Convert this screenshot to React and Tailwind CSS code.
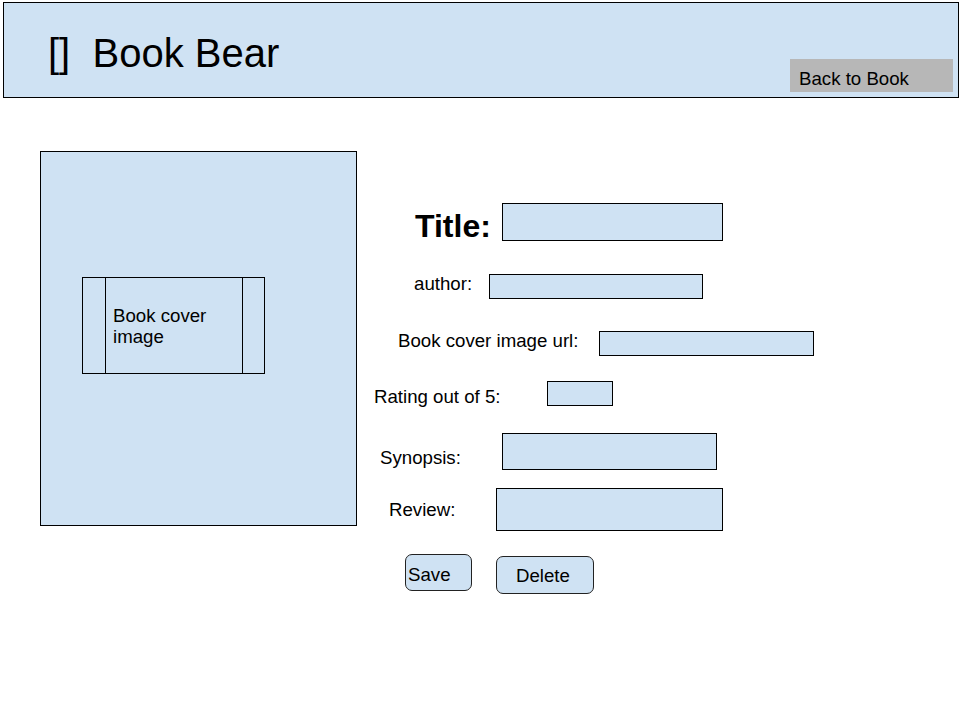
const rows = [
  { id: 'author', label: 'author:', labelWidth: 'w-[132px]', pad: 'pl-[57px]', labelTop: 'mt-[1px]', box: 'mt-[2px] w-[214px] h-[25px]', gap: 'mt-[31px]' },
  { id: 'url', label: 'Book cover image url:', labelWidth: 'w-[242px]', pad: 'pl-[41px]', labelTop: 'mt-[2px]', box: 'mt-[3px] w-[215px] h-[25px]', gap: 'mt-[29px]' },
  { id: 'rating', label: 'Rating out of 5:', labelWidth: 'w-[190px]', pad: 'pl-[17px]', labelTop: 'mt-[5px]', box: 'mt-0 w-[66px] h-[25px]', gap: 'mt-[25px]' },
  { id: 'synopsis', label: 'Synopsis:', labelWidth: 'w-[145px]', pad: 'pl-[23px]', labelTop: 'mt-[14px]', box: 'mt-0 w-[215px] h-[37px]', gap: 'mt-[25px]' },
  { id: 'review', label: 'Review:', labelWidth: 'w-[139px]', pad: 'pl-[32px]', labelTop: 'mt-[11px]', box: 'mt-0 w-[227px] h-[43px]', gap: 'mt-[18px]' },
];

export default function App() {
  return (
    <div className="w-[960px] h-[720px] bg-white text-black font-['Liberation_Sans',Arial,sans-serif]">
      <header className="ml-[3px] mt-[2px] w-[956px] h-[96px] border border-black bg-[#cfe2f3] flex justify-between">
        <h1 className="pl-[44px] pt-[27px] text-[40px] leading-[46px] whitespace-pre">[]  Book Bear</h1>
        <button className="self-end mb-[5px] mr-[5px] w-[163px] h-[33px] bg-[#b7b7b7] text-left pl-[9px] pt-[9px] text-[18.67px] leading-[22px] flex items-start">
          Back to Book
        </button>
      </header>

      <main className="flex mt-[53px]">
        <section className="ml-[40px] w-[317px] h-[375px] shrink-0 border border-black bg-[#cfe2f3]">
          <div className="ml-[41px] mt-[125px] flex w-[183px] h-[97px] border border-black">
            <div className="w-[23px] shrink-0 border-r border-black" />
            <p className="flex-1 pl-[7px] pt-[27px] text-[18.67px] leading-[21px]">Book cover image</p>
            <div className="w-[22px] shrink-0 border-l border-black" />
          </div>
        </section>

        <form className="flex flex-col pt-[52px]">
          <div className="flex items-start h-[38px]">
            <label className="w-[145px] shrink-0 pl-[58px] mt-[5px] text-[32px] leading-[36px] font-bold">Title:</label>
            <div className="w-[221px] h-[38px] border border-black bg-[#cfe2f3]" />
          </div>

          {rows.map((row) => (
            <div key={row.id} className={`flex items-start ${row.gap}`}>
              <label className={`${row.labelWidth} ${row.pad} ${row.labelTop} shrink-0 text-[18.67px] leading-[22px] whitespace-nowrap`}>
                {row.label}
              </label>
              <div className={`${row.box} border border-black bg-[#cfe2f3]`} />
            </div>
          ))}

          <div className="flex items-start mt-[23px]">
            <button type="button" className="ml-[48px] w-[67px] h-[37px] rounded-[7px] border border-[#222] bg-[#cfe2f3] text-left pl-[2px] pt-[9px] text-[18.67px] leading-[22px] flex items-start">
              Save
            </button>
            <button type="button" className="ml-[24px] mt-[2px] w-[98px] h-[38px] rounded-[7px] border border-[#222] bg-[#cfe2f3] text-left pl-[19px] pt-[8px] text-[18.67px] leading-[22px] flex items-start">
              Delete
            </button>
          </div>
        </form>
      </main>
    </div>
  );
}
